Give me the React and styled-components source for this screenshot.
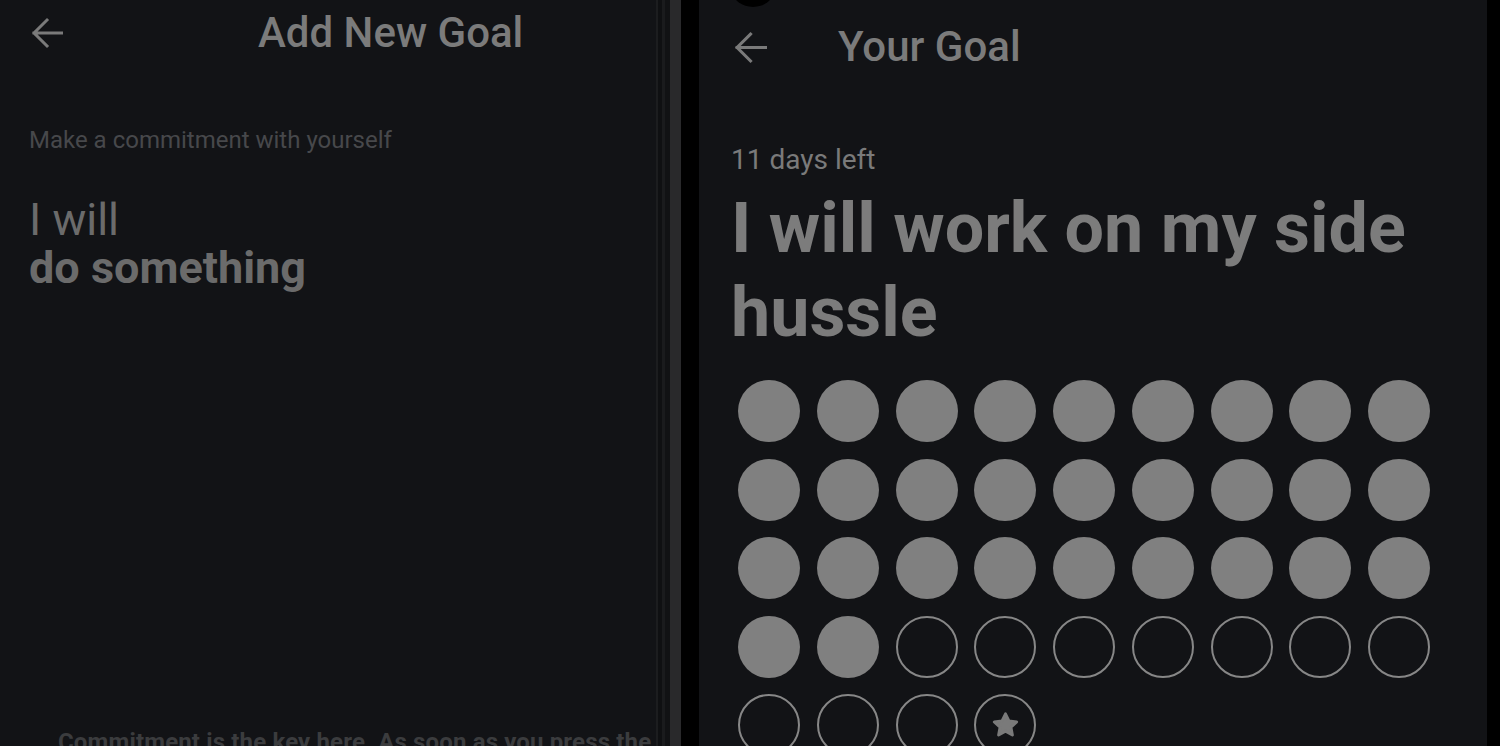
import React from "react";
import styled, { createGlobalStyle } from "styled-components";

const GlobalStyle = createGlobalStyle`
  html, body {
    margin: 0;
    padding: 0;
    background: #000;
  }
  body {
    font-family: Roboto, "Noto Sans", sans-serif;
  }
`;

const Screen = styled.div`
  display: flex;
  width: 1500px;
  height: 746px;
  overflow: hidden;
  background: #000;
`;

const Panel = styled.div`
  position: relative;
  flex: 0 0 ${(p) => p.$width}px;
  box-sizing: border-box;
  padding-top: ${(p) => p.$top || 0}px;
  background: #121316;
  display: flex;
  flex-direction: column;
  overflow: hidden;

  & > * {
    flex-shrink: 0;
  }
`;

const Bezel = styled.div`
  display: flex;
  flex: 0 0 auto;
`;

const Strip = styled.div`
  width: ${(p) => p.$w}px;
  background: ${(p) => p.$c};
`;

const Camera = styled.div`
  position: absolute;
  left: 34px;
  top: -23px;
  width: 40px;
  height: 30px;
  border-radius: 50%;
  background: #000;
`;

const Header = styled.div`
  display: flex;
  align-items: center;
  height: 66px;
  padding-left: ${(p) => p.$left}px;
`;

const BackIcon = styled.svg`
  flex: 0 0 auto;
  color: #7a7a7a;
`;

const Title = styled.h1`
  margin: 0 0 0 ${(p) => p.$gap}px;
  font-size: 42px;
  line-height: 1;
  font-weight: 500;
  color: #7b7b7b;
`;

const Hint = styled.div`
  margin: 62px 0 0 29px;
  font-size: 24px;
  line-height: 1;
  color: #47484b;
`;

const Statement = styled.div`
  margin: 44px 0 0 29px;
  font-size: 45px;
  line-height: 48px;
  color: #6b6b6b;
`;

const Strong = styled.div`
  font-weight: 700;
`;

const Footer = styled.div`
  margin: 434px 0 0 0;
  padding: 0 0 0 58px;
  font-size: 24px;
  line-height: 32px;
  letter-spacing: 0.15px;
  font-weight: 700;
  color: #3b3c3e;
`;

const DaysLeft = styled.div`
  margin: 66px 0 0 32px;
  font-size: 28px;
  line-height: 1;
  color: #7a7a7a;
`;

const GoalText = styled.div`
  margin: 12px 40px 0 32px;
  font-size: 70px;
  line-height: 84px;
  font-weight: 700;
  color: #7c7c7c;
`;

const DotGrid = styled.div`
  display: grid;
  grid-template-columns: repeat(9, 62px);
  gap: 16.6px 16.75px;
  margin: 26px 0 0 39px;
`;

const Dot = styled.div`
  box-sizing: border-box;
  width: 62px;
  height: 62px;
  border-radius: 50%;
  display: flex;
  align-items: center;
  justify-content: center;
  background: ${(p) => (p.$done ? "#808080" : "transparent")};
  border: ${(p) => (p.$done ? "none" : "2px solid #878787")};
`;

const Arrow = ({ size }) => (
  <BackIcon width={size} height={size} viewBox="0 0 32 32" fill="none">
    <path
      d="M31 16H3M16 3L3 16l13 13"
      stroke="currentColor"
      strokeWidth="3"
      strokeLinecap="square"
    />
  </BackIcon>
);

const Star = () => (
  <svg width="31" height="31" viewBox="0 0 26 26">
    <path
      d="M13 3.2l2.9 6 6.5.8-4.8 4.5 1.2 6.5L13 17.8 7.2 21l1.2-6.5L3.6 10l6.5-.8z"
      fill="#7a7a7a"
      stroke="#7a7a7a"
      strokeWidth="2.4"
      strokeLinejoin="round"
    />
  </svg>
);

const TOTAL = 40;
const DONE = 29;

const bezel = [
  { w: 2, c: "#1c1d1f" },
  { w: 4, c: "#0f1012" },
  { w: 3, c: "#1a1b1d" },
  { w: 5, c: "#111214" },
  { w: 11, c: "#29292b" },
  { w: 18, c: "#000" },
];

export default function App() {
  const dots = Array.from({ length: TOTAL }, (_, i) => i);

  return (
    <>
      <GlobalStyle />
      <Screen>
        <Panel $width={656}>
          <Header $left={31}>
            <Arrow size={32} />
            <Title $gap={195}>Add New Goal</Title>
          </Header>
          <Hint>Make a commitment with yourself</Hint>
          <Statement>
            I will
            <Strong>do something</Strong>
          </Statement>
          <Footer>
            Commitment is the key here. As soon as you press the button your
            goal is locked in.
          </Footer>
        </Panel>

        <Bezel>
          {bezel.map((s, i) => (
            <Strip key={i} $w={s.w} $c={s.c} />
          ))}
        </Bezel>

        <Panel $width={788} $top={14}>
          <Camera />
          <Header $left={35}>
            <Arrow size={33} />
            <Title $gap={71}>Your Goal</Title>
          </Header>
          <DaysLeft>11 days left</DaysLeft>
          <GoalText>I will work on my side hussle</GoalText>
          <DotGrid>
            {dots.map((i) => (
              <Dot key={i} $done={i < DONE}>
                {i === TOTAL - 1 && <Star />}
              </Dot>
            ))}
          </DotGrid>
        </Panel>
      </Screen>
    </>
  );
}
